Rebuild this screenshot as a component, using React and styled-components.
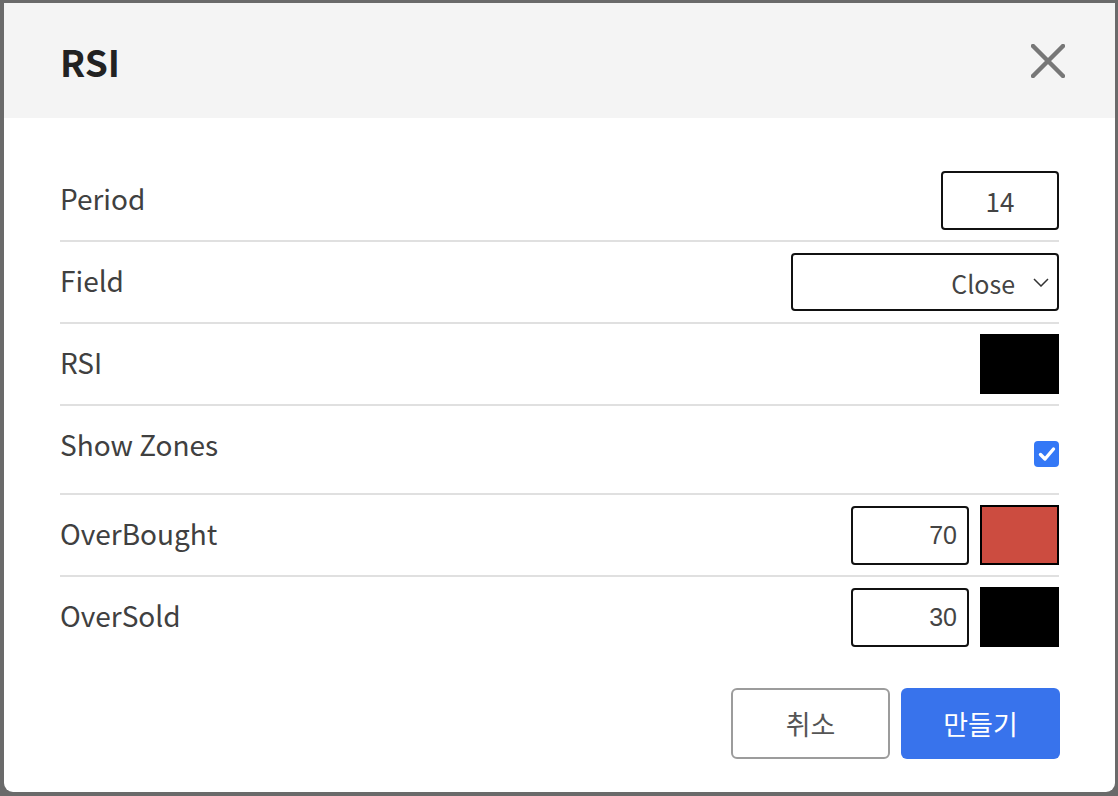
import React from 'react';
import styled, { createGlobalStyle } from 'styled-components';

const GlobalStyle = createGlobalStyle`
  html, body {
    margin: 0;
    padding: 0;
    background: #6a6a6a;
  }
  body {
    font-family: "Noto Sans CJK KR", "Noto Sans", sans-serif;
  }
`;

const Backdrop = styled.div`
  width: 1118px;
  height: 796px;
  padding: 3px 3px 4px 4px;
  box-sizing: border-box;
  background: #6a6a6a;
`;

const Modal = styled.div`
  width: 1111px;
  height: 789px;
  background: #fff;
  border-radius: 0 0 9px 9px;
  display: flex;
  flex-direction: column;
  overflow: hidden;
`;

const Header = styled.div`
  height: 115px;
  flex-shrink: 0;
  background: #f4f4f4;
  display: flex;
  align-items: center;
  justify-content: space-between;
  padding: 0 50px 0 56px;
`;

const Title = styled.h2`
  margin: 0;
  font-size: 37px;
  font-weight: 700;
  color: #222;
  line-height: 1;
  padding-top: 1px;
`;

const CloseButton = styled.button`
  width: 34px;
  height: 34px;
  padding: 0;
  border: none;
  background: none;
  cursor: pointer;
  display: flex;
  align-items: center;
  justify-content: center;
`;

const Body = styled.div`
  padding: 42px 56px 0 56px;
`;

const Row = styled.div`
  display: flex;
  align-items: center;
  justify-content: space-between;
  min-height: ${(p) => (p.$tall ? 67 : 60)}px;
  padding: 10px 0;
  border-bottom: ${(p) => (p.$last ? 'none' : '2px solid #e0e0e0')};
`;

const Label = styled.span`
  font-size: 28px;
  font-weight: 400;
  color: #404040;
  line-height: 1;
  margin-bottom: ${(p) => (p.$shift || 0) + 4}px;
`;

const Controls = styled.div`
  display: flex;
  align-items: center;
  gap: 11px;
`;

const NumberInput = styled.input`
  width: 118px;
  height: 59px;
  box-sizing: border-box;
  border: 2px solid #111;
  border-radius: 4px;
  padding: 0 10px;
  text-align: ${(p) => (p.$center ? 'center' : 'right')};
  font-family: ${(p) =>
    p.$plain ? '"Liberation Sans", Arial, sans-serif' : '"Noto Sans CJK KR", sans-serif'};
  font-size: ${(p) => (p.$plain ? 25 : 26)}px;
  color: #444;
  background: #fff;
  outline: none;
`;

const Select = styled.div`
  width: 268px;
  height: 58px;
  box-sizing: border-box;
  border: 2px solid #111;
  border-radius: 4px;
  display: flex;
  align-items: center;
  justify-content: flex-end;
  gap: 18px;
  padding: 2px 8px 0 0;
  font-size: 25px;
  color: #444;
`;

const Chevron = styled.svg`
  margin-top: -2px;
`;

const Swatch = styled.div`
  width: 79px;
  height: 60px;
  box-sizing: border-box;
  background: ${(p) => p.$color};
  border: 2px solid #000;
`;

const Check = styled.div`
  width: 25px;
  height: 26px;
  border-radius: 4px;
  background: #3478f6;
  display: flex;
  align-items: center;
  justify-content: center;
  margin-top: 8px;
`;

const Footer = styled.div`
  display: flex;
  justify-content: flex-end;
  gap: 11px;
  padding: 31px 55px 0 0;
`;

const Button = styled.button`
  width: 159px;
  height: 71px;
  box-sizing: border-box;
  border-radius: 6px;
  font-family: "Noto Sans CJK KR", sans-serif;
  font-size: 27px;
  font-weight: 400;
  cursor: pointer;
  border: ${(p) => (p.$primary ? 'none' : '2px solid #9c9c9c')};
  background: ${(p) => (p.$primary ? '#3873ec' : '#fff')};
  color: ${(p) => (p.$primary ? '#fff' : '#555')};
`;

export default function App() {
  return (
    <>
      <GlobalStyle />
      <Backdrop>
        <Modal>
          <Header>
            <Title>RSI</Title>
            <CloseButton aria-label="close">
              <svg width="34" height="34" viewBox="0 0 34 34">
                <path d="M2 2 L32 32 M32 2 L2 32" stroke="#777" strokeWidth="4.5" strokeLinecap="round" />
              </svg>
            </CloseButton>
          </Header>
          <Body>
            <Row>
              <Label>Period</Label>
              <NumberInput $center defaultValue="14" />
            </Row>
            <Row>
              <Label>Field</Label>
              <Select>
                <span>Close</span>
                <Chevron width="16" height="9" viewBox="0 0 16 9">
                  <path d="M1 1 L8 8 L15 1" fill="none" stroke="#333" strokeWidth="1.5" />
                </Chevron>
              </Select>
            </Row>
            <Row>
              <Label>RSI</Label>
              <Swatch $color="#000" />
            </Row>
            <Row $tall>
              <Label $shift={8}>Show Zones</Label>
              <Check>
                <svg width="18" height="16" viewBox="0 0 18 16">
                  <path d="M2.5 8.5 L7 13 L15.5 3" fill="none" stroke="#fff" strokeWidth="3.4" strokeLinecap="round" strokeLinejoin="round" />
                </svg>
              </Check>
            </Row>
            <Row>
              <Label>OverBought</Label>
              <Controls>
                <NumberInput $plain defaultValue="70" />
                <Swatch $color="#cc4c40" />
              </Controls>
            </Row>
            <Row $last>
              <Label>OverSold</Label>
              <Controls>
                <NumberInput $plain defaultValue="30" />
                <Swatch $color="#000" />
              </Controls>
            </Row>
          </Body>
          <Footer>
            <Button>취소</Button>
            <Button $primary>만들기</Button>
          </Footer>
        </Modal>
      </Backdrop>
    </>
  );
}
